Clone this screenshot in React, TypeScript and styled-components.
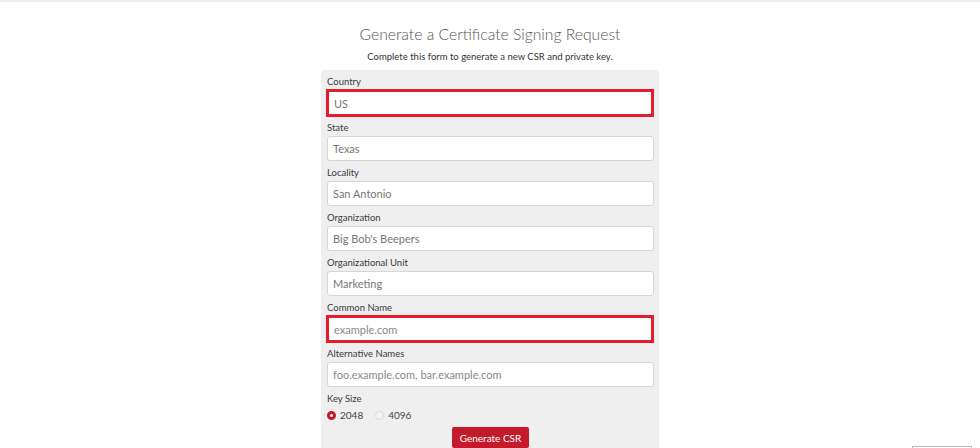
import React from "react";
import styled, { createGlobalStyle } from "styled-components";

const GlobalStyle = createGlobalStyle`
  html, body {
    margin: 0;
    padding: 0;
    background: #ffffff;
    font-family: Lato, "Open Sans", Arial, sans-serif;
    color: #333333;
    overflow: hidden;
  }
`;

const Page = styled.div`
  border-top: 2px solid #eeeeee;
  height: 446px;
  display: flex;
  flex-direction: column;
  align-items: center;
  position: relative;
`;

const Title = styled.h1`
  margin: 21px 0 0;
  font-size: 15.7px;
  line-height: 22px;
  font-weight: 300;
  color: #555555;
`;

const Subtitle = styled.p`
  margin: 5px 0 0;
  font-size: 9.5px;
  line-height: 14px;
  color: #333333;
`;

const Panel = styled.form`
  margin-top: 6px;
  width: 338px;
  box-sizing: border-box;
  padding: 5px 5px 0 6px;
  background: #efefef;
  border-radius: 4px 4px 0 0;
  flex: 1;
`;

const Label = styled.label`
  display: block;
  font-size: 9.5px;
  line-height: 14px;
  color: #3a3a3a;
`;

const Input = styled.input<{ $invalid?: boolean }>`
  display: block;
  width: ${(p) => (p.$invalid ? "calc(100% + 1px)" : "100%")};
  box-sizing: border-box;
  height: ${(p) => (p.$invalid ? "28px" : "25px")};
  margin: ${(p) => (p.$invalid ? "0 0 4px -1px" : "1px 0 5px")};
  padding: 0 5px;
  border: ${(p) => (p.$invalid ? "3px solid #e31d2b" : "1px solid #d6d6d6")};
  border-radius: ${(p) => (p.$invalid ? "0" : "3px")};
  background: #ffffff;
  font-family: inherit;
  font-size: 11px;
  color: #777777;
  outline: none;

  &::placeholder {
    color: #888888;
  }
`;

const RadioRow = styled.div`
  display: flex;
  align-items: center;
  gap: 12px;
  height: 16px;
  margin-top: 1px;
`;

const RadioOption = styled.span`
  display: flex;
  align-items: center;
  gap: 4px;
  font-size: 10px;
  color: #444444;
`;

const RadioDot = styled.span<{ $checked?: boolean }>`
  width: 9px;
  height: 9px;
  border-radius: 50%;
  box-sizing: border-box;
  background: ${(p) => (p.$checked ? "#ffffff" : "#f4f4f4")};
  border: ${(p) => (p.$checked ? "3px solid #c41a2c" : "1px solid #d8d8d8")};
`;

const Actions = styled.div`
  display: flex;
  justify-content: center;
  margin-top: 4px;
`;

const Button = styled.button`
  height: 21px;
  padding: 0 8px;
  border: none;
  border-radius: 2px;
  background: #c41a2c;
  color: #ffffff;
  font-family: inherit;
  font-size: 10px;
`;

const Corner = styled.div`
  position: absolute;
  right: 8px;
  bottom: -30px;
  width: 58px;
  height: 30px;
  border: 1px solid #bbbbbb;
  background: #ffffff;
`;

const fields = [
  { label: "Country", value: "US", invalid: true },
  { label: "State", value: "Texas" },
  { label: "Locality", value: "San Antonio" },
  { label: "Organization", value: "Big Bob's Beepers" },
  { label: "Organizational Unit", value: "Marketing" },
  { label: "Common Name", placeholder: "example.com", invalid: true },
  { label: "Alternative Names", placeholder: "foo.example.com, bar.example.com" },
];

const App = () => {
  return (
    <>
      <GlobalStyle />
      <Page>
        <Title>Generate a Certificate Signing Request</Title>
        <Subtitle>Complete this form to generate a new CSR and private key.</Subtitle>
        <Panel onSubmit={(e) => e.preventDefault()}>
          {fields.map((f) => (
            <div key={f.label}>
              <Label>{f.label}</Label>
              <Input
                $invalid={f.invalid}
                defaultValue={f.value}
                placeholder={f.placeholder}
              />
            </div>
          ))}
          <Label>Key Size</Label>
          <RadioRow>
            <RadioOption>
              <RadioDot $checked />
              2048
            </RadioOption>
            <RadioOption>
              <RadioDot />
              4096
            </RadioOption>
          </RadioRow>
          <Actions>
            <Button type="submit">Generate CSR</Button>
          </Actions>
        </Panel>
        <Corner />
      </Page>
    </>
  );
};

export default App;
